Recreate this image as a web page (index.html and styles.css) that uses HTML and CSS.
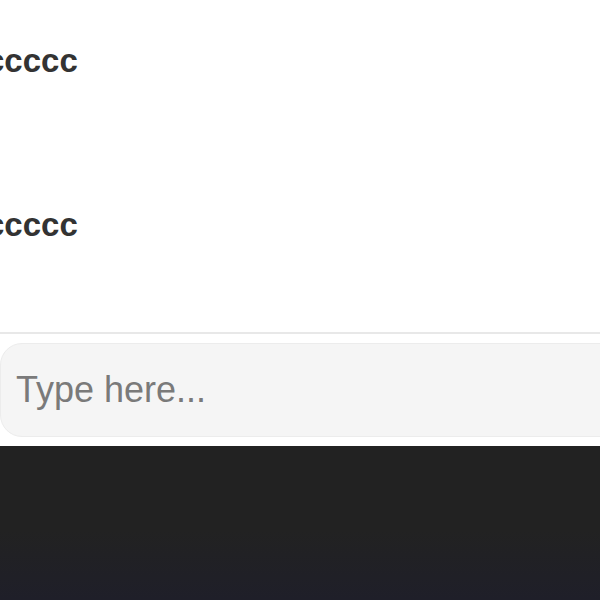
FILE: index.html
```html
<!DOCTYPE html>
<html lang="en">
<head>
    <meta charset="UTF-8">
    <meta name="viewport" content="width=device-width, initial-scale=1.0">
    <title>Chat</title>
    <link rel="stylesheet" href="styles.css">
</head>
<body>

    <div class="chat">
        <div class="messages">
            <div class="message">ccccc</div>
            <div class="message">ccccc</div>
        </div>
        <div class="composer">
            <input type="text" class="composer-input" placeholder="Type here...">
        </div>
    </div>

    <div class="footer"></div>

</body>
</html>
```

FILE: styles.css
```css
html, body {
    margin: 0;
    height: 100%;
    overflow: hidden;
}
body {
    font-family: "Liberation Sans", Arial, sans-serif;
    background: #ffffff;
    display: flex;
    flex-direction: column;
}
.chat {
    background: white;
}
.messages {
    height: 332px;
    box-sizing: border-box;
    padding-top: 41px;
    display: flex;
    flex-direction: column;
    gap: 124px;
}
.message {
    font-size: 33px;
    font-weight: bold;
    line-height: 40px;
    color: #333;
    margin-left: -14px;
    white-space: nowrap;
}
.composer {
    border-top: 2px solid #e8e8e8;
    padding: 9px 0;
    overflow: hidden;
}
.composer-input {
    display: block;
    box-sizing: border-box;
    width: calc(100% + 40px);
    height: 94px;
    margin: 0;
    padding: 0 0 0 15px;
    border: 1px solid #ececec;
    border-radius: 22px;
    background: #f5f5f5;
    font-family: "Liberation Sans", Arial, sans-serif;
    font-size: 36px;
    color: #333;
    outline: none;
}
.composer-input::placeholder {
    color: #7a7a7a;
}
.footer {
    flex: 1;
    background: linear-gradient(#222222 0, #222222 55%, #1f1f29 100%);
}
```
